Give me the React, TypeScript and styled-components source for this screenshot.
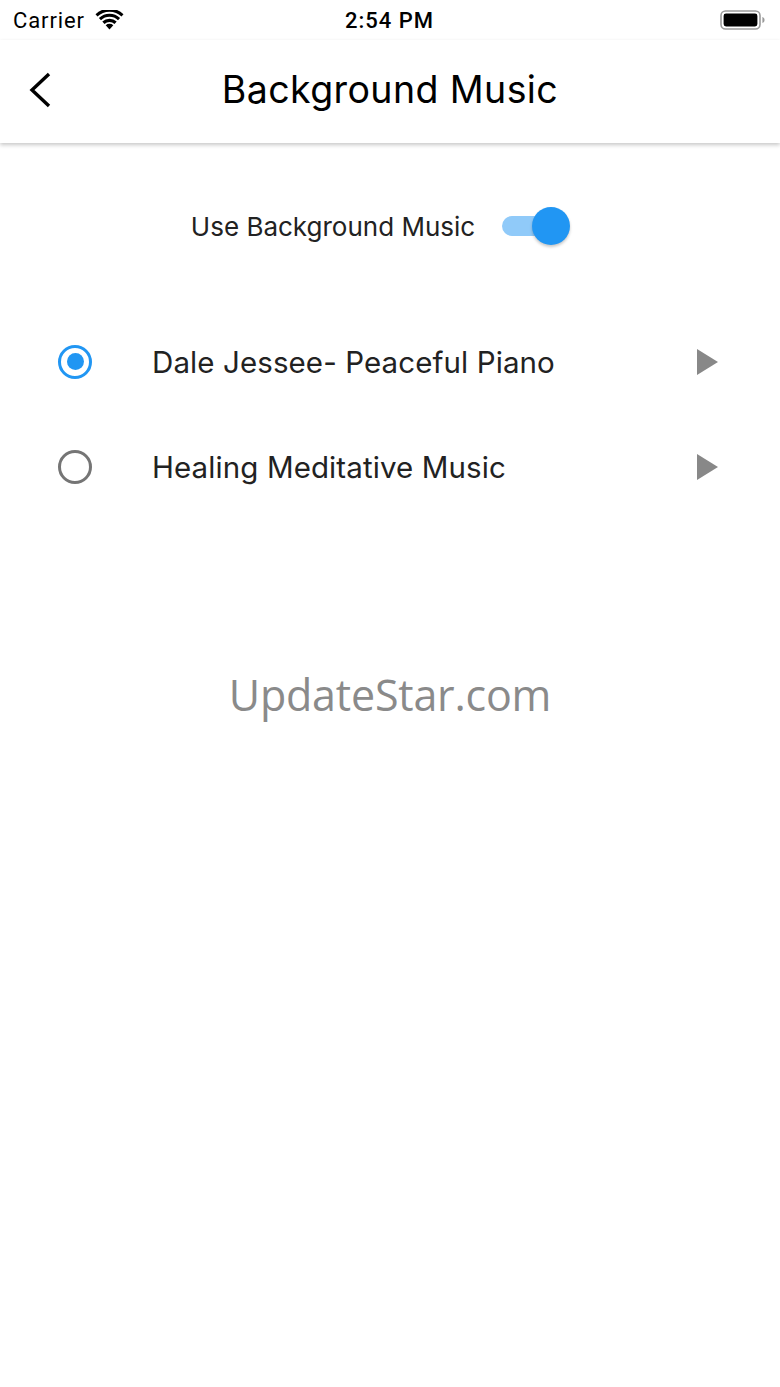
import styled, { createGlobalStyle } from "styled-components";

const GlobalStyle = createGlobalStyle`
  html, body {
    margin: 0;
    padding: 0;
    background: #ffffff;
  }
  body {
    font-family: Inter, "Noto Sans", sans-serif;
    color: #222222;
  }
`;

type Track = {
  id: string;
  title: string;
  selected: boolean;
};

const tracks: Track[] = [
  { id: "piano", title: "Dale Jessee- Peaceful Piano", selected: true },
  { id: "healing", title: "Healing Meditative Music", selected: false },
];

const WifiIcon = () => (
  <svg width="29" height="20" viewBox="0 0 28 20" aria-hidden>
    <path d="M14 19.5 L10.2 15.3 A5.6 5.6 0 0 1 17.8 15.3 Z" fill="#000" />
    <path d="M6.8 11.6 A10.4 10.4 0 0 1 21.2 11.6 L19 14 A7.3 7.3 0 0 0 9 14 Z" fill="#000" />
    <path d="M3.4 7.9 A15.4 15.4 0 0 1 24.6 7.9 L22.5 10.2 A12.3 12.3 0 0 0 5.5 10.2 Z" fill="#000" />
    <path d="M0 4.2 A20.3 20.3 0 0 1 28 4.2 L26 6.5 A17.3 17.3 0 0 0 2 6.5 Z" fill="#000" />
  </svg>
);

const BatteryIcon = () => (
  <svg width="46" height="20" viewBox="0 0 46 20" aria-hidden>
    <rect x="1" y="1" width="39" height="18" rx="4.5" fill="none" stroke="#9a9a9a" strokeWidth="1.6" />
    <rect x="3.6" y="3.6" width="33.8" height="12.8" rx="2.4" fill="#000" />
    <path d="M42.4 7 Q44.6 7.4 44.6 10 Q44.6 12.6 42.4 13 Z" fill="#9a9a9a" />
  </svg>
);

const BackIcon = () => (
  <svg width="26" height="36" viewBox="0 0 26 36" aria-hidden>
    <path d="M21 2 L4 18 L21 34" fill="none" stroke="#000" strokeWidth="3.4" strokeLinecap="butt" strokeLinejoin="miter" />
  </svg>
);

const PlayIcon = () => (
  <svg width="21" height="26" viewBox="0 0 21 26" aria-hidden>
    <path d="M0 0 L21 13 L0 26 Z" fill="#888888" />
  </svg>
);

export default function App() {
  return (
    <Screen>
      <GlobalStyle />
      <StatusBar>
        <StatusLeft>
          <Carrier>Carrier</Carrier>
          <WifiIcon />
        </StatusLeft>
        <Clock>2:54 PM</Clock>
        <StatusRight>
          <BatteryIcon />
        </StatusRight>
      </StatusBar>

      <AppBar>
        <BackButton type={"button"} aria-label={"Back"}>
          <BackIcon />
        </BackButton>
        <Title>Background Music</Title>
        <span />
      </AppBar>

      <SwitchRow>
        <SwitchLabel>Use Background Music</SwitchLabel>
        <Switch $on={true} role={"switch"} aria-checked={true}>
          <SwitchThumb $on={true} />
        </Switch>
      </SwitchRow>

      <TrackList>
        {tracks.map((track) => (
          <TrackRow key={track.id}>
            <Radio $selected={track.selected}>{track.selected && <RadioDot />}</Radio>
            <TrackTitle>{track.title}</TrackTitle>
            <PlayButton type={"button"} aria-label={`Play ${track.title}`}>
              <PlayIcon />
            </PlayButton>
          </TrackRow>
        ))}
      </TrackList>

      <Watermark>UpdateStar.com</Watermark>
    </Screen>
  );
}

const Screen = styled.div`
  width: 780px;
  min-height: 1387px;
  background: #ffffff;
  display: flex;
  flex-direction: column;
`;

const StatusBar = styled.div`
  height: 40px;
  display: grid;
  grid-template-columns: 1fr auto 1fr;
  align-items: center;
  padding: 0 13px 0 13px;
  font-family: Roboto, "Liberation Sans", sans-serif;
  color: #000000;
`;

const StatusLeft = styled.div`
  display: flex;
  align-items: center;
  gap: 10px;
`;

const Carrier = styled.span`
  font-size: 22px;
  letter-spacing: 0.9px;
`;

const Clock = styled.span`
  font-size: 22px;
  font-weight: 500;
  letter-spacing: 1px;
  margin-left: -1px;
`;

const StatusRight = styled.div`
  display: flex;
  justify-content: flex-end;
  padding-right: 1px;
`;

const AppBar = styled.header`
  height: 103px;
  display: grid;
  grid-template-columns: 1fr auto 1fr;
  align-items: center;
  background: #ffffff;
  box-shadow: 0 2px 4px rgba(0, 0, 0, 0.22);
  position: relative;
  z-index: 1;
`;

const BackButton = styled.button`
  justify-self: start;
  margin-left: 28px;
  margin-top: -3px;
  padding: 0;
  border: 0;
  background: transparent;
  display: flex;
  cursor: pointer;
`;

const Title = styled.h1`
  margin: -4px 0 0;
  font-size: 37.5px;
  font-weight: 400;
  color: #000000;
  letter-spacing: 0.4px;
`;

const SwitchRow = styled.div`
  margin-top: 53px;
  height: 60px;
  display: flex;
  align-items: center;
  justify-content: center;
  gap: 27px;
  padding-right: 23px;
`;

const SwitchLabel = styled.span`
  font-size: 26px;
  color: #222222;
`;

const Switch = styled.div<{ $on: boolean }>`
  width: 64px;
  height: 20px;
  border-radius: 10px;
  background: ${({ $on }) => ($on ? "#90caf9" : "#bdbdbd")};
  display: flex;
  align-items: center;
  justify-content: ${({ $on }) => ($on ? "flex-end" : "flex-start")};
`;

const SwitchThumb = styled.div<{ $on: boolean }>`
  width: 38px;
  height: 38px;
  border-radius: 50%;
  margin-right: -4px;
  background: ${({ $on }) => ($on ? "#2196f3" : "#fafafa")};
  box-shadow: 0 2px 3px rgba(0, 0, 0, 0.22);
`;

const TrackList = styled.div`
  margin-top: 53px;
  display: flex;
  flex-direction: column;
`;

const TrackRow = styled.div`
  height: 105px;
  display: flex;
  align-items: center;
  padding: 0 62px 0 58px;
`;

const Radio = styled.div<{ $selected: boolean }>`
  box-sizing: border-box;
  width: 34px;
  height: 34px;
  border-radius: 50%;
  border: 3.5px solid ${({ $selected }) => ($selected ? "#2196f3" : "#757575")};
  display: flex;
  align-items: center;
  justify-content: center;
  flex-shrink: 0;
`;

const RadioDot = styled.div`
  width: 17px;
  height: 17px;
  border-radius: 50%;
  background: #2196f3;
`;

const TrackTitle = styled.span`
  flex: 1;
  margin-left: 60px;
  font-size: 29.5px;
  color: #222222;
  letter-spacing: 0.1px;
`;

const PlayButton = styled.button`
  padding: 0;
  border: 0;
  background: transparent;
  display: flex;
  cursor: pointer;
`;

const Watermark = styled.div`
  margin-top: 146px;
  text-align: center;
  font-family: "Open Sans", "Noto Sans", sans-serif;
  font-size: 43px;
  line-height: 60px;
  color: #8a8a8a;
  letter-spacing: -0.2px;
`;
